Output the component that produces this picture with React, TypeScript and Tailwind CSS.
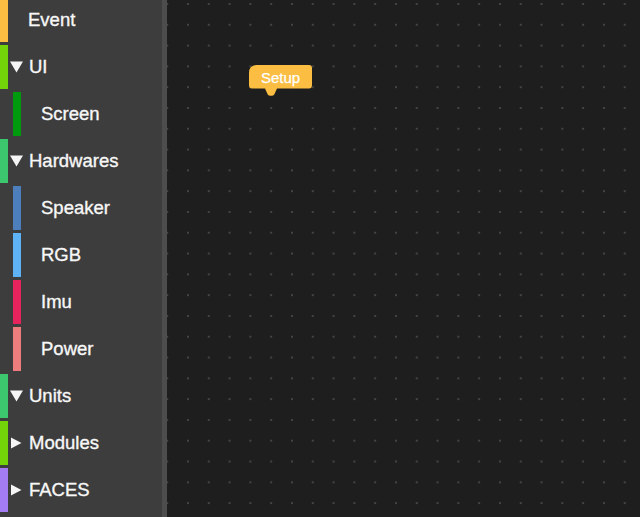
import React from "react";

type Row = { label: string; color: string; level: 0 | 1; arrow?: "down" | "right" };

const rows: Row[] = [
  { label: "Event", color: "#fbbd42", level: 0 },
  { label: "UI", color: "#74d40a", level: 0, arrow: "down" },
  { label: "Screen", color: "#009a0e", level: 1 },
  { label: "Hardwares", color: "#3cc66e", level: 0, arrow: "down" },
  { label: "Speaker", color: "#4e7fbd", level: 1 },
  { label: "RGB", color: "#5db3f5", level: 1 },
  { label: "Imu", color: "#e6235c", level: 1 },
  { label: "Power", color: "#ee7d7d", level: 1 },
  { label: "Units", color: "#3cc66e", level: 0, arrow: "down" },
  { label: "Modules", color: "#74d40a", level: 0, arrow: "right" },
  { label: "FACES", color: "#a37cf4", level: 0, arrow: "right" },
];

function Arrow({ dir }: { dir: "down" | "right" }) {
  return dir === "down" ? (
    <svg width="13" height="12" viewBox="0 0 13 12" className="shrink-0">
      <polygon points="0,0.5 13,0.5 6.5,11.5" fill="#f5f5f5" />
    </svg>
  ) : (
    <svg width="12" height="12" viewBox="0 0 12 12" className="shrink-0">
      <polygon points="1,0.5 11.5,6 1,11.5" fill="#f5f5f5" />
    </svg>
  );
}

export default function App() {
  return (
    <div className="flex h-[517px] w-[640px] overflow-hidden bg-[#1e1e1e] font-['Liberation_Sans',Arial,sans-serif]">
      <div className="flex h-full w-[167px] shrink-0 bg-[#3d3d3d]">
        <div className="flex w-[162px] flex-col gap-[3px] -mt-[2px]">
          {rows.map((r) => (
            <div key={r.label} className="flex h-[44px] shrink-0 items-center">
              {r.level === 0 ? (
                <>
                  <div className="h-full w-[8px] shrink-0" style={{ backgroundColor: r.color }} />
                  <div className="flex w-[21px] shrink-0 justify-start pl-[2px]">
                    {r.arrow ? <Arrow dir={r.arrow} /> : null}
                  </div>
                  <span className={`text-[18.5px] leading-none text-[#f7f7f7] [-webkit-text-stroke:0.35px_#f7f7f7] ${r.arrow ? "" : "-ml-[1px]"}`}>{r.label}</span>
                </>
              ) : (
                <>
                  <div className="ml-[13px] h-full w-[8px] shrink-0" style={{ backgroundColor: r.color }} />
                  <span className="ml-[20px] text-[18.5px] leading-none text-[#f7f7f7] [-webkit-text-stroke:0.35px_#f7f7f7]">{r.label}</span>
                </>
              )}
            </div>
          ))}
        </div>
        <div className="h-full w-[5px] bg-[#4d4d4d]" />
      </div>
      <div className="relative h-full flex-1 bg-[#1e1e1e] bg-[radial-gradient(circle_at_1px_1px,#444444_1px,transparent_1.2px)] bg-[size:20.8px_20.8px] bg-[position:20px_3px]">
        <div className="absolute left-[82px] top-[65px] h-[31px] w-[63px]">
          <svg width="63" height="31" viewBox="0 0 63 31" className="absolute left-0 top-0">
            <path
              d="M8,0 L60,0 Q63,0 63,3 L63,20 Q63,23.5 60,23.5 L28,23.5 L25.5,29 Q25,30.7 23,30.7 L21,30.7 Q19,30.7 18.5,29 L16,23.5 L3,23.5 Q0,23.5 0,20 L0,8 Q0,0 8,0 Z"
              fill="#fbbd42"
            />
          </svg>
          <div className="absolute left-0 top-0 flex h-[23.5px] w-[63px] items-center justify-center pt-[1px] text-[15px] leading-none text-white [-webkit-text-stroke:0.25px_#ffffff]">
            Setup
          </div>
        </div>
      </div>
    </div>
  );
}
